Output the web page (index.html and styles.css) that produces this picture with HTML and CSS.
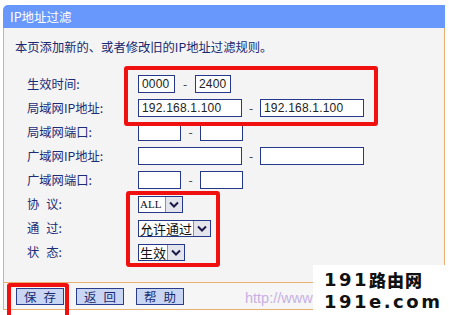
FILE: index.html
```html
<!DOCTYPE html>
<html lang="zh">
<head>
<meta charset="utf-8">
<link rel="stylesheet" href="styles.css">
</head>
<body>
<div class="panel">
  <div class="hdr">IP地址过滤</div>
  <div class="main">
    <p class="desc">本页添加新的、或者修改旧的IP地址过滤规则。</p>
    <div class="form">
      <div class="lbl">生效时间:</div>
      <div class="fld"><span class="inp w37">0000</span><span class="dash">-</span><span class="inp w36">2400</span></div>
      <div class="lbl">局域网IP地址:</div>
      <div class="fld"><span class="inp w104">192.168.1.100</span><span class="dash d18">-</span><span class="inp w104">192.168.1.100</span></div>
      <div class="lbl">局域网端口:</div>
      <div class="fld"><span class="inp w43"></span><span class="dash d19">-</span><span class="inp w43"></span></div>
      <div class="lbl">广域网IP地址:</div>
      <div class="fld"><span class="inp w104"></span><span class="dash d18">-</span><span class="inp w104"></span></div>
      <div class="lbl">广域网端口:</div>
      <div class="fld"><span class="inp w43"></span><span class="dash d19">-</span><span class="inp w43"></span></div>
      <div class="lbl">协<span class="gap"></span>议:</div>
      <div class="fld"><span class="sel"><span class="val serif">ALL</span><span class="arr"><svg width="10" height="7" viewBox="0 0 10 7"><path d="M1 1.5 L5 5.5 L9 1.5" fill="none" stroke="#1a1a4a" stroke-width="2"/></svg></span></span></div>
      <div class="lbl">通<span class="gap"></span>过:</div>
      <div class="fld"><span class="sel"><span class="val">允许通过</span><span class="arr"><svg width="10" height="7" viewBox="0 0 10 7"><path d="M1 1.5 L5 5.5 L9 1.5" fill="none" stroke="#1a1a4a" stroke-width="2"/></svg></span></span></div>
      <div class="lbl">状<span class="gap"></span>态:</div>
      <div class="fld"><span class="sel"><span class="val">生效</span><span class="arr"><svg width="10" height="7" viewBox="0 0 10 7"><path d="M1 1.5 L5 5.5 L9 1.5" fill="none" stroke="#1a1a4a" stroke-width="2"/></svg></span></span></div>
    </div>
  </div>
  <div class="foot">
    <span class="btn">保<span class="bgap"></span>存</span>
    <span class="btn">返<span class="bgap"></span>回</span>
    <span class="btn">帮<span class="bgap"></span>助</span>
    <span class="url">http://www</span>
  </div>
</div>
<div class="mark box1"></div>
<div class="mark box2"></div>
<div class="mark box3"></div>
<div class="wm">
  <div class="wl"><span class="lat">191</span><span class="cjk">路由网</span></div>
  <div class="wl"><span class="lat">191e.com</span></div>
</div>
</body>
</html>
```
FILE: styles.css
```css
html, body { margin: 0; padding: 0; background: #fff; }
body {
  width: 449px; height: 315px; overflow: hidden; position: relative;
  font-family: "Noto Sans CJK SC", "Noto Sans", sans-serif;
  font-size: 12px; color: #1c2c78;
}
.panel { margin: 5px 0 0 3px; width: 442px; }
.hdr {
  height: 23px; line-height: 23px; background: #6898fc; color: #fff;
  border-radius: 5px 0 0 0; padding-left: 7px; font-size: 12.5px;
}
.main {
  background: #f4f4f4; border-left: 1px solid #e8b070; border-right: 1px solid #e8b070;
  height: 254px; box-sizing: border-box; padding-top: 10px;
}
.desc { margin: 0 0 16px 11px; line-height: 18px; height: 18px; color: #1a2a70; font-size: 12.3px; }
.form {
  display: grid; grid-template-columns: 111px 1fr; grid-auto-rows: 24px;
  padding-left: 23px;
}
.lbl { display: flex; align-items: center; line-height: 18px; font-size: 12.3px; }
.gap { display: inline-block; width: 7px; }
.fld { display: flex; align-items: center; }
.inp {
  box-sizing: border-box; height: 18px; border: 1px solid #26388a; background: #fff;
  font-size: 12px; line-height: 16px; padding-left: 3px; color: #222;
  font-family: "Liberation Sans", sans-serif; letter-spacing: 0.2px;
}
.w37 { width: 37px; } .w36 { width: 36px; } .w104 { width: 104px; } .w43 { width: 43px; }
.dash { width: 20px; text-align: center; font-size: 12px; line-height: 16px; color: #333; }
.d18 { width: 18px; } .d19 { width: 19px; }
.sel {
  display: flex; height: 17px; box-sizing: border-box; border: 1px solid #26388a; background: #fff;
}
.val { line-height: 15px; padding: 0 1px; color: #111; font-size: 13px; }
.val.serif { font-family: "Liberation Serif", serif; font-size: 11px; width: 24px; }
.arr {
  width: 16px; background: #e4e4ec; border-left: 1px solid #8890b0;
  display: flex; align-items: center; justify-content: center;
}
.foot {
  position: relative; background: #f6f6f6;
  border-top: 1px solid #e8b070; border-bottom: 1px solid #e8b070; border-left: 1px solid #e8b070;
  height: 26px; box-sizing: content-box; display: flex; align-items: flex-start;
  padding: 0 0 0 12px; gap: 12px;
}
.btn {
  margin-top: 5px; width: 48px; height: 17px; box-sizing: border-box;
  background: #c8d6f4; border: 1px solid #2a3c8c; text-align: center;
  line-height: 15px; font-size: 12.5px; color: #1a2a70;
}
.bgap { display: inline-block; width: 7px; }
.url {
  position: absolute; left: 241px; top: 5px; white-space: nowrap;
  font-family: "Liberation Sans", sans-serif;
  font-size: 14.5px; line-height: 20px; color: #c8b0e4;
}
.mark { position: absolute; border: 4px solid #f01010; border-radius: 3px; box-sizing: border-box; }
.box1 { left: 124px; top: 66px; width: 254px; height: 60px; }
.box2 { left: 126px; top: 191px; width: 94px; height: 76px; }
.box3 { left: 7px; top: 283px; width: 62px; height: 36px; }
.wm {
  position: absolute; left: 313px; top: 265px; width: 136px; height: 50px; background: #fff;
  color: #111; padding: 4px 0 0 11px; box-sizing: border-box;
}
.wl { height: 22px; line-height: 22px; white-space: nowrap; display: flex; align-items: center; }
.lat { font-family: "DejaVu Sans", sans-serif; font-weight: bold; font-size: 18px; letter-spacing: 2.5px; line-height: 20px; }
.cjk { font-family: "Noto Sans CJK SC", sans-serif; font-weight: 900; font-size: 17px; letter-spacing: 1px; line-height: 20px; }
```
